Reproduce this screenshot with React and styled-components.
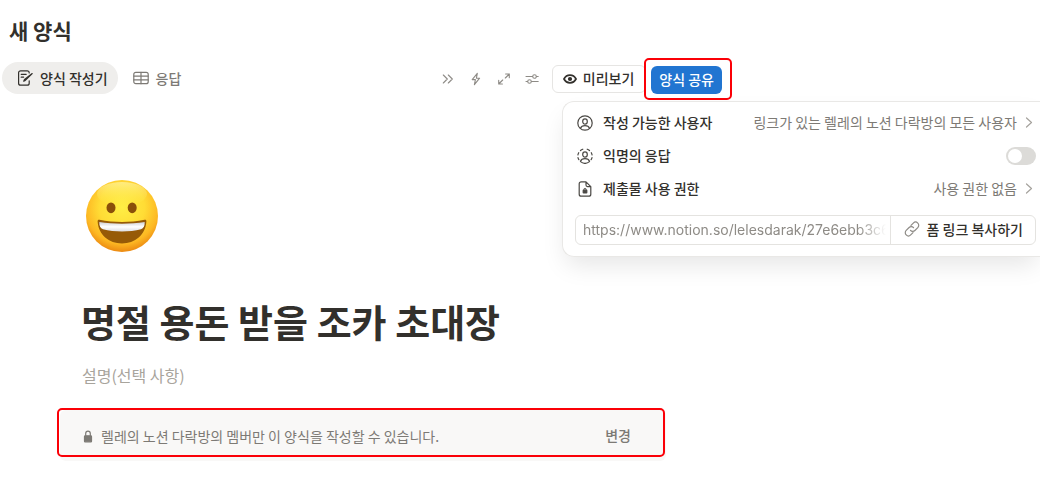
import { useState } from 'react';
import styled, { createGlobalStyle } from 'styled-components';

const GlobalStyle = createGlobalStyle`
  * {
    box-sizing: border-box;
  }

  body {
    margin: 0;
    background: #ffffff;
    color: #32302c;
    font-family: 'Noto Sans CJK KR', sans-serif;
    font-size: 14px;
    line-height: 20px;
  }

  button,
  input {
    font: inherit;
    color: inherit;
  }
`;

const Page = styled.div`
  position: relative;
  padding: 14px 12px 20px 0;
`;

const FormName = styled.h2`
  margin: 0 0 12px 9px;
  font-size: 21px;
  line-height: 32px;
  font-weight: 700;
`;

const TopBar = styled.header`
  display: flex;
  align-items: flex-start;
  justify-content: space-between;
  padding: 0 308px 0 2px;
`;

const Tabs = styled.nav`
  display: flex;
  padding-top: 4px;
`;

const Tab = styled.button`
  display: inline-flex;
  align-items: center;
  gap: 7px;
  height: 32px;
  padding: 0 10px 1px 15px;
  border: 0;
  border-radius: 16px;
  background: ${props => (props.$active ? '#efeeec' : 'transparent')};
  color: ${props => (props.$active ? '#32302c' : '#7d7a75')};
  font-weight: 500;
  white-space: nowrap;
  cursor: pointer;
`;

const Tools = styled.div`
  display: flex;
  align-items: center;
`;

const IconButton = styled.button`
  display: inline-flex;
  align-items: center;
  justify-content: center;
  width: 28px;
  height: 28px;
  padding: 0;
  border: 0;
  background: transparent;
  color: #8e8b86;
  cursor: pointer;
`;

const PreviewButton = styled.button`
  display: inline-flex;
  align-items: center;
  gap: 5px;
  height: 28px;
  margin: 0 -2px 0 6px;
  padding: 0 11px 2px 9px;
  border: 1px solid #e6e5e3;
  border-radius: 6px;
  background: #ffffff;
  font-weight: 500;
  white-space: nowrap;
  cursor: pointer;
`;

const ShareHighlight = styled.div`
  position: relative;
  padding: 6px 8px 4px 5px;
  border: 2px solid #fb0007;
  border-radius: 5px;
  background: #ffffff;
`;

const ShareButton = styled.button`
  display: block;
  height: 28px;
  padding: 0 8px 2px;
  border: 0;
  border-radius: 6px;
  background: #2175d1;
  color: #ffffff;
  font-weight: 500;
  white-space: nowrap;
  cursor: pointer;
`;

const SharePanel = styled.section`
  position: absolute;
  top: 101px;
  right: 12px;
  width: 478px;
  padding: 4px 4px 11px 12px;
  border: 1px solid #e9e8e6;
  border-right: 0;
  border-radius: 12px 0 0 12px;
  background: #ffffff;
  box-shadow: 0 12px 24px -4px rgba(0, 0, 0, 0.1);
  clip-path: inset(-10px 0 -40px -40px);
`;

const SettingRow = styled.div`
  display: flex;
  align-items: center;
  height: 33px;

  > svg {
    margin: 0 10px 0 2px;
    color: #4a4844;
  }
`;

const SettingLabel = styled.label`
  flex: 1;
  padding-bottom: 2px;
  font-weight: 500;
`;

const SettingValue = styled.button`
  display: inline-flex;
  align-items: center;
  gap: 8px;
  padding: 0 3px 2px 0;
  border: 0;
  background: transparent;
  color: #7d7a75;
  white-space: nowrap;
  cursor: pointer;
`;

const Switch = styled.input`
  appearance: none;
  display: flex;
  width: 30px;
  height: 18px;
  margin: 0;
  padding: 2px;
  border-radius: 9px;
  background: ${props => (props.checked ? '#2175d1' : '#dcdbd8')};
  justify-content: ${props => (props.checked ? 'flex-end' : 'flex-start')};
  cursor: pointer;

  &::before {
    content: '';
    width: 14px;
    height: 14px;
    border-radius: 50%;
    background: #ffffff;
  }
`;

const LinkBox = styled.div`
  display: flex;
  height: 30px;
  margin-top: 10px;
  border: 1px solid #e4e3e0;
  border-radius: 6px;
`;

const LinkInput = styled.input`
  flex: 1;
  min-width: 0;
  margin: 0 4px 0 7px;
  padding: 0;
  border: 0;
  outline: none;
  background: transparent;
  color: #8e8b86;
  font-family: Inter, sans-serif;
  mask-image: linear-gradient(to left, transparent, #000000 28px);
`;

const CopyButton = styled.button`
  display: inline-flex;
  align-items: center;
  gap: 7px;
  padding: 0 12px 2px 13px;
  border: 0;
  border-left: 1px solid #e4e3e0;
  background: transparent;
  font-weight: 500;
  white-space: nowrap;
  cursor: pointer;

  svg {
    color: #8e8b86;
  }
`;

const FormBody = styled.main`
  max-width: 666px;
  padding: 79px 0 0 60px;
`;

const FormHead = styled.div`
  padding-left: 22px;
`;

const Emoji = styled.svg`
  display: block;
  width: 74px;
  height: 74px;
  margin-left: 3px;
`;

const Title = styled.h1`
  margin: 44px 0 19px -1px;
  font-size: 38px;
  line-height: 48px;
  font-weight: 700;
  white-space: nowrap;
`;

const Description = styled.input`
  display: block;
  width: 100%;
  height: 24px;
  padding: 0 0 2px;
  border: 0;
  outline: none;
  font-size: 16px;

  &::placeholder {
    color: #a8a49c;
  }
`;

const Notice = styled.div`
  position: relative;
  display: flex;
  align-items: center;
  height: 51px;
  margin-top: 22px;
  padding: 0 35px 0 23px;
  border-radius: 6px;
  background: #f9f8f7;
  color: #7d7a75;

  &::after {
    content: '';
    position: absolute;
    inset: -2px 1px 4px -3px;
    border: 2px solid #fb0007;
    border-radius: 5px;
    pointer-events: none;
  }
`;

const NoticeText = styled.p`
  flex: 1;
  margin: 0 0 0 8px;
`;

const ChangeButton = styled.button`
  padding: 0 0 2px;
  border: 0;
  background: transparent;
  font-weight: 500;
  cursor: pointer;
`;

const Icon = ({ size = 16, width = size, stroke = 1.2, children }) => (
  <svg
    width={width}
    height={size}
    viewBox={`0 0 ${width} ${size}`}
    fill="none"
    stroke="currentColor"
    strokeWidth={stroke}
    strokeLinecap="round"
    strokeLinejoin="round"
    aria-hidden="true"
  >
    {children}
  </svg>
);

const FormIcon = () => (
  <Icon>
    <path d="M12.2 3V2.8a2 2 0 0 0-2-2H3.6a2 2 0 0 0-2 2v10.4a2 2 0 0 0 2 2h6.6a2 2 0 0 0 2-2v-2.4M4.2 4.3h5M4.2 7.2h2.4" />
    <path d="M15.2 3.6 8.3 10.4l-1.6.8.8-1.7z" />
  </Icon>
);

const TableIcon = () => (
  <Icon>
    <rect x="0.8" y="2.3" width="14.4" height="11.4" rx="2" />
    <path d="M.8 6.1h14.4M.8 9.9h14.4M8 2.3v11.4" />
  </Icon>
);

const EyeIcon = () => (
  <Icon stroke={1.8}>
    <path d="M2 9C3.300 6.500 5.500 5.200 8 5.200s4.700 1.300 6 3.800c-1.300 2.500-3.500 3.800-6 3.800S3.300 11.500 2 9Z" />
    <circle cx="8" cy="9" r="1.200" fill="currentColor" />
  </Icon>
);

const PersonIcon = ({ dashed }) => (
  <Icon>
    {dashed ? (
      <path d="M5.800 1.200A7 7 0 0 0 3.500 2.500M1.700 4.700A7 7 0 0 0 .9 7M1 9.600a7 7 0 0 0 .9 2.100M10.200 1.200a7 7 0 0 1 2.300 1.300M14.300 4.700a7 7 0 0 1 .8 2.300M15 9.600a7 7 0 0 1-.9 2.100M3.500 13.600a7.200 7.200 0 0 0 9 0" />
    ) : (
      <circle cx="8" cy="8" r="7.200" />
    )}
    <ellipse cx="8" cy="6.500" rx="2.300" ry="2.700" />
    <path d="M3.500 13.200c.6-1.700 2.300-2.500 4.500-2.500s3.900.8 4.500 2.500" />
  </Icon>
);

const FileLockIcon = () => (
  <Icon>
    <path d="M9 .8H4.200a2 2 0 0 0-2 2v10.400a2 2 0 0 0 2 2h7.600a2 2 0 0 0 2-2V5.600zM9 .8v3.300a1.500 1.500 0 0 0 1.500 1.500h3.300" />
    <rect x="6.200" y="9.200" width="3.600" height="2.800" rx="0.400" fill="currentColor" />
    <path d="M7 9v-.7a1 1 0 0 1 2 0V9" strokeWidth="0.900" />
  </Icon>
);

const ChevronIcon = () => (
  <Icon size={12} width={8}>
    <path d="m1.500 2 5 4.500-5 4.500" stroke="#a5a29d" />
  </Icon>
);

const LinkIcon = () => (
  <Icon>
    <path d="m7 4.400 2.300-2.300a3 3 0 0 1 4.500 4.500l-2.900 2.900a3 3 0 0 1-4.400-.2" />
    <path d="m9 11.600-2.300 2.300a3 3 0 0 1-4.500-4.500l2.900-2.900a3 3 0 0 1 4.400.2" />
  </Icon>
);

const LockIcon = () => (
  <Icon size={14} width={10}>
    <rect x="1.500" y="6.800" width="7" height="6" rx="0.600" fill="currentColor" />
    <path d="M2.700 6.500v-2a2.300 2.300 0 0 1 4.600 0v2" />
  </Icon>
);

const tools = [
  { label: '더 보기', path: 'm3.300 4 4 4-4 4M8.300 4l4 4-4 4' },
  { label: '자동화', path: 'M9.300 2.300 4.200 8.600h3.200l-1 5 5.200-6.400H8.400z' },
  { label: '확장', path: 'M9.600 3h3.700v3.700M13.300 3 9.300 7M6.400 13H2.700V9.300M2.700 13l4-4' },
  {
    label: '설정',
    path: 'M2 5.500h6.700M12.300 5.500h1.900M2 10.500h1.700M7.300 10.500h6.900M12.300 5.500a1.800 1.800 0 1 1-3.600 0 1.800 1.800 0 0 1 3.600 0M7.300 10.500a1.800 1.800 0 1 1-3.600 0 1.800 1.800 0 0 1 3.600 0',
  },
];

const GrinningFace = () => (
  <Emoji viewBox="0 0 74 74" role="img" aria-label="웃는 얼굴">
    <defs>
      <radialGradient id="face" cx="0.5" cy="0.38" r="0.63">
        <stop offset="0" stopColor="#ffee45" />
        <stop offset="0.5" stopColor="#ffdc35" />
        <stop offset="0.8" stopColor="#fdb823" />
        <stop offset="1" stopColor="#ea8510" />
      </radialGradient>
      <linearGradient id="shine" x1="0" y1="0" x2="0" y2="1">
        <stop offset="0" stopColor="#fff9b8" stopOpacity="0.6" />
        <stop offset="1" stopColor="#fff04a" stopOpacity="0" />
      </linearGradient>
      <linearGradient id="teeth" x1="0" y1="0" x2="0" y2="1">
        <stop offset="0" stopColor="#cfd0d6" />
        <stop offset="0.5" stopColor="#ffffff" />
        <stop offset="1" stopColor="#dcdde3" />
      </linearGradient>
    </defs>
    <circle cx="37" cy="37" r="36" fill="url(#face)" />
    <ellipse cx="37" cy="15" rx="25" ry="12" fill="url(#shine)" />
    <ellipse cx="26" cy="28.800" rx="4.500" ry="5.400" fill="#8a4f0a" />
    <ellipse cx="47.200" cy="28.800" rx="4.500" ry="5.400" fill="#8a4f0a" />
    <path
      d="M12.600 42.300c-.1-1.200.7-1.800 1.800-1.500 14.500 3 30.700 3 45.200 0 1.100-.3 1.900.3 1.800 1.500C60.500 56 50 64.500 37 64.500S13.500 56 12.600 42.300Z"
      fill="#965a07"
    />
    <path
      d="M14.300 43c14.500 2.300 30.900 2.300 45.400 0 .1 3.800-1 6.500-3.700 7.300-11.500 3-26.500 3-38 0-2.700-.8-3.800-3.500-3.700-7.300Z"
      fill="url(#teeth)"
    />
  </Emoji>
);

const App = () => {
  const [anonymous, setAnonymous] = useState(false);
  const [description, setDescription] = useState('');

  return (
    <>
      <GlobalStyle />
      <Page>
        <FormName>새 양식</FormName>

        <TopBar>
          <Tabs>
            <Tab type="button" $active>
              <FormIcon />
              양식 작성기
            </Tab>
            <Tab type="button">
              <TableIcon />
              응답
            </Tab>
          </Tabs>

          <Tools>
            {tools.map(({ label, path }) => (
              <IconButton key={label} type="button" aria-label={label}>
                <Icon size={16} stroke={1.1}>
                  <path d={path} />
                </Icon>
              </IconButton>
            ))}
            <PreviewButton type="button">
              <EyeIcon />
              미리보기
            </PreviewButton>
            <ShareHighlight>
              <ShareButton type="button">양식 공유</ShareButton>
            </ShareHighlight>
          </Tools>
        </TopBar>

        <SharePanel>
          <SettingRow>
            <PersonIcon />
            <SettingLabel htmlFor="who">작성 가능한 사용자</SettingLabel>
            <SettingValue id="who" type="button">
              링크가 있는 렐레의 노션 다락방의 모든 사용자
              <ChevronIcon />
            </SettingValue>
          </SettingRow>
          <SettingRow>
            <PersonIcon dashed />
            <SettingLabel htmlFor="anonymous">익명의 응답</SettingLabel>
            <Switch
              id="anonymous"
              type="checkbox"
              role="switch"
              checked={anonymous}
              onChange={(event) => setAnonymous(event.target.checked)}
            />
          </SettingRow>
          <SettingRow>
            <FileLockIcon />
            <SettingLabel htmlFor="access">제출물 사용 권한</SettingLabel>
            <SettingValue id="access" type="button">
              사용 권한 없음
              <ChevronIcon />
            </SettingValue>
          </SettingRow>
          <LinkBox>
            <LinkInput
              type="text"
              readOnly
              aria-label="폼 링크"
              value="https://www.notion.so/lelesdarak/27e6ebb3c6c"
            />
            <CopyButton type="button">
              <LinkIcon />
              폼 링크 복사하기
            </CopyButton>
          </LinkBox>
        </SharePanel>

        <FormBody>
          <FormHead>
            <GrinningFace />
            <Title>명절 용돈 받을 조카 초대장</Title>
            <Description
              type="text"
              aria-label="설명"
              placeholder="설명(선택 사항)"
              value={description}
              onChange={(event) => setDescription(event.target.value)}
            />
          </FormHead>
          <Notice>
            <LockIcon />
            <NoticeText>렐레의 노션 다락방의 멤버만 이 양식을 작성할 수 있습니다.</NoticeText>
            <ChangeButton type="button">변경</ChangeButton>
          </Notice>
        </FormBody>
      </Page>
    </>
  );
};

export default App;
